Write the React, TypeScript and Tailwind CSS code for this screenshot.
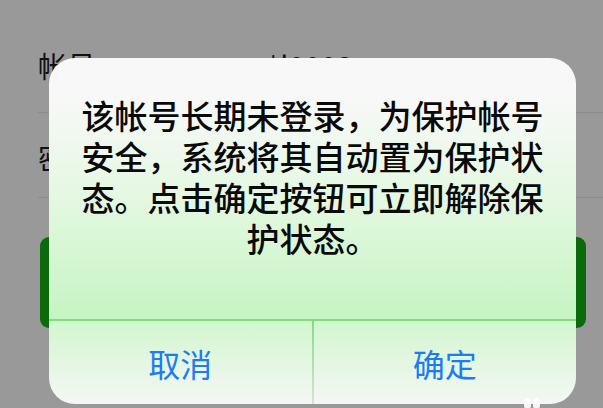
const CJK = { fontFamily: '"Noto Sans CJK SC", "Noto Sans", sans-serif' }

function Backdrop() {
  return (
    <div className="w-full h-full bg-[#999999]" style={CJK}>
      <div className="ml-[38px] h-[113px] border-b border-[#8c8c8c] flex items-start pt-[47px]">
        <span className="text-[29px] leading-[36px] text-[#111]">帐号</span>
        <span className="ml-[156px] text-[29px] leading-[36px] text-[#111]">a*l0003</span>
      </div>
      <div className="ml-[38px] h-[85px] border-b border-[#8c8c8c] pt-[26px]">
        <span className="text-[29px] leading-[36px] text-[#111]">密码</span>
      </div>
      <div className="ml-[40px] mr-[17px] mt-[39px] h-[91px] rounded-[9px] bg-[#0b6b0b]" />
    </div>
  )
}

function AlertDialog() {
  return (
    <div
      className="absolute left-[49px] top-[58px] w-[527px] h-[346px] rounded-[26px] overflow-hidden flex flex-col"
      style={CJK}
    >
      <div className="h-[261px] px-[30px] pt-[37px] text-center text-[33px] leading-[41px] font-medium text-[#0a0a0a] bg-linear-to-b from-[#f8f8f8] from-15% via-[#e6f8e4] via-50% to-[#c5f5c2]">
        该帐号长期未登录，为保护帐号安全，系统将其自动置为保护状态。点击确定按钮可立即解除保护状态。
      </div>
      <div className="h-[2px] bg-[#84dc82]" />
      <div className="flex-1 flex bg-linear-to-b from-[#d2f6cf] to-[#f4f7f4]">
        <button className="flex-1 flex items-center justify-center text-[32px] text-[#1c7cf2]">取消</button>
        <div className="w-[2px] bg-linear-to-b from-[#84dc82] to-[#d6e2d6]" />
        <button className="flex-1 flex items-center justify-center text-[32px] text-[#1c7cf2]">确定</button>
      </div>
    </div>
  )
}

export default function App() {
  return (
    <div className="relative w-[603px] h-[408px] overflow-hidden">
      <Backdrop />
      <AlertDialog />
      <div className="absolute left-[524px] top-[398px] flex gap-[2px]">
        <div className="w-[7px] h-[11px] rounded-full bg-white/90" />
        <div className="w-[7px] h-[11px] rounded-full bg-white/90" />
      </div>
    </div>
  )
}
